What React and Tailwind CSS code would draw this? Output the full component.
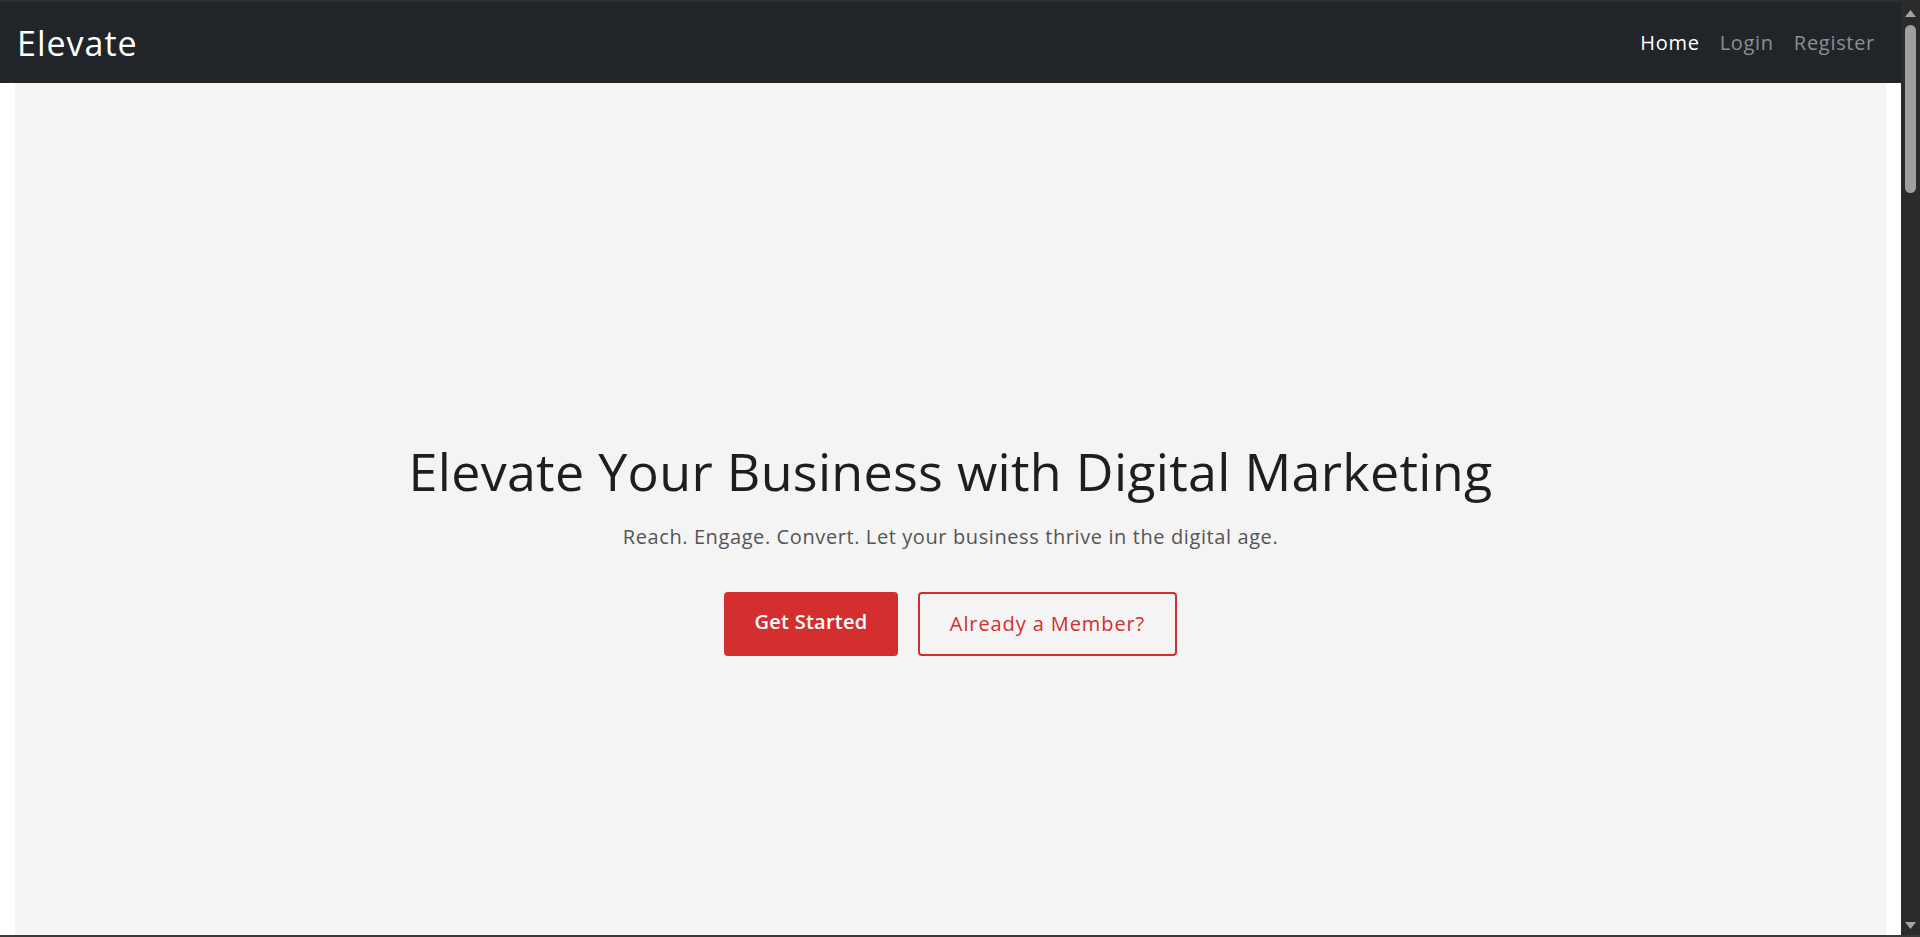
import React from 'react';

const font = { fontFamily: '"Open Sans", "Liberation Sans", sans-serif' };

const Navbar = () => (
  <nav className="h-[81px] bg-[#212529] flex items-center justify-between pl-[17px] pr-[26px]">
    <a href="#" className="text-white text-[34px] leading-none tracking-[1px]">Elevate</a>
    <ul className="flex items-center gap-[20px] text-[20px] tracking-[0.7px]">
      <li><a href="#" className="text-white">Home</a></li>
      <li><a href="#" className="text-[#8c8e91]">Login</a></li>
      <li><a href="#" className="text-[#8c8e91]">Register</a></li>
    </ul>
  </nav>
);

const Hero = () => (
  <section className="bg-white px-[15px]">
    <div className="h-[937px] bg-[#f4f4f4] flex flex-col items-center justify-center pb-[8px]">
      <h1 className="text-[52px] leading-[62px] text-[#1e1e1e] tracking-[0.3px]">
        Elevate Your Business with Digital Marketing
      </h1>
      <p className="mt-[20px] text-[20px] leading-[30px] text-[#555555] tracking-[0.6px]">
        Reach. Engage. Convert. Let your business thrive in the digital age.
      </p>
      <div className="mt-[40px] flex gap-[20px]">
        <a href="#" className="w-[174px] h-[64px] rounded-[4px] bg-[#d32f2f] text-white text-[20px] font-semibold tracking-[0.25px] flex items-center justify-center pb-[4px]">
          Get Started
        </a>
        <a href="#" className="w-[259px] h-[64px] rounded-[4px] border-2 border-[#d32f2f] text-[#d32f2f] text-[20px] font-medium tracking-[0.9px] flex items-center justify-center">
          Already a Member?
        </a>
      </div>
    </div>
  </section>
);

const Scrollbar = () => (
  <div className="w-[19px] bg-[#2b2b2b] flex flex-col items-center">
    <div className="h-[23px] flex items-center">
      <svg width="11" height="7" viewBox="0 0 11 7"><polygon points="5.5,0 11,7 0,7" fill="#a3a3a3" /></svg>
    </div>
    <div className="w-[11px] h-[168px] rounded-full bg-[#9f9f9f]" />
    <div className="flex-1" />
    <div className="h-[20px] flex items-center">
      <svg width="11" height="7" viewBox="0 0 11 7"><polygon points="0,0 11,0 5.5,7" fill="#a3a3a3" /></svg>
    </div>
  </div>
);

export default function App() {
  return (
    <div className="h-[937px] flex flex-col bg-[#2d2d30] overflow-hidden" style={font}>
      <div className="h-[2px] bg-[#2d2d30]" />
      <div className="flex-1 flex min-h-0">
        <div className="flex-1 overflow-hidden">
          <Navbar />
          <Hero />
        </div>
        <Scrollbar />
      </div>
      <div className="h-[2px] bg-[#3a3a3a]" />
    </div>
  );
}
